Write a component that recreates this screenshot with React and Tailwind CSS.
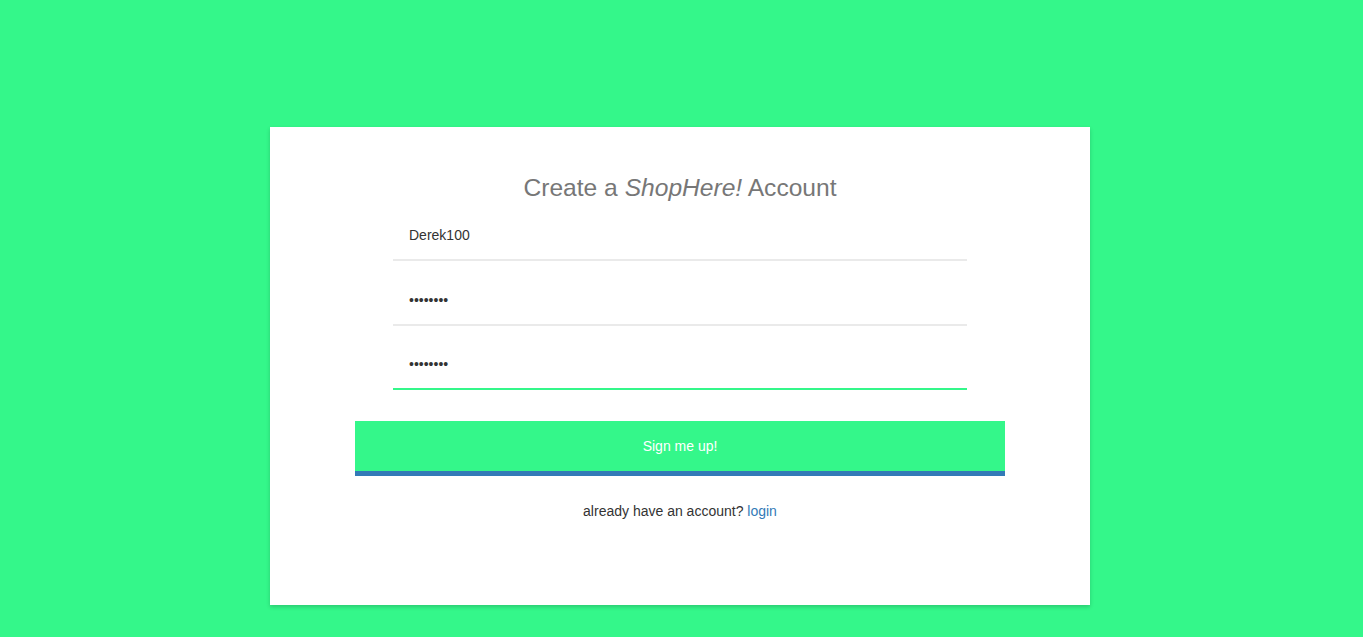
import React from "react";

export default function App() {
  return (
    <div
      className="min-h-screen w-full bg-[#34f78a] pt-[127px] pb-8"
      style={{ fontFamily: '"Liberation Sans", Arial, sans-serif' }}
    >
      <div className="ml-[270px] w-[820px] h-[478px] bg-white shadow-[0_2px_4px_rgba(0,0,0,0.18)] pt-[48px]">
        <h1 className="text-center text-[24.6px] leading-[26px] text-[#777777]">
          Create a <em>ShopHere!</em> Account
        </h1>
        <form className="mt-[10px] flex flex-col items-center">
          <input
            type="text"
            defaultValue="Derek100"
            className="w-[574px] h-[50px] px-4 text-[14px] text-[#333333] border-b-2 border-[#eaeaea] outline-none"
          />
          <input
            type="password"
            defaultValue="12345678"
            className="mt-[15px] w-[574px] h-[50px] px-4 text-[14px] text-[#333333] border-b-2 border-[#eaeaea] outline-none"
          />
          <input
            type="password"
            defaultValue="12345678"
            autoFocus
            className="mt-[14px] w-[574px] h-[50px] px-4 text-[14px] text-[#333333] border-b-2 border-[#34f78a] outline-none"
          />
          <button
            type="button"
            className="mt-[31px] w-[650px] h-[55px] bg-[#34f78a] border-b-[5px] border-[#337ab7] text-white text-[14px]"
          >
            Sign me up!
          </button>
        </form>
        <p className="mt-[25px] text-center text-[14px] leading-[20px] text-[#333333]">
          already have an account?{" "}
          <a href="#" className="text-[#337ab7]">
            login
          </a>
        </p>
      </div>
    </div>
  );
}
